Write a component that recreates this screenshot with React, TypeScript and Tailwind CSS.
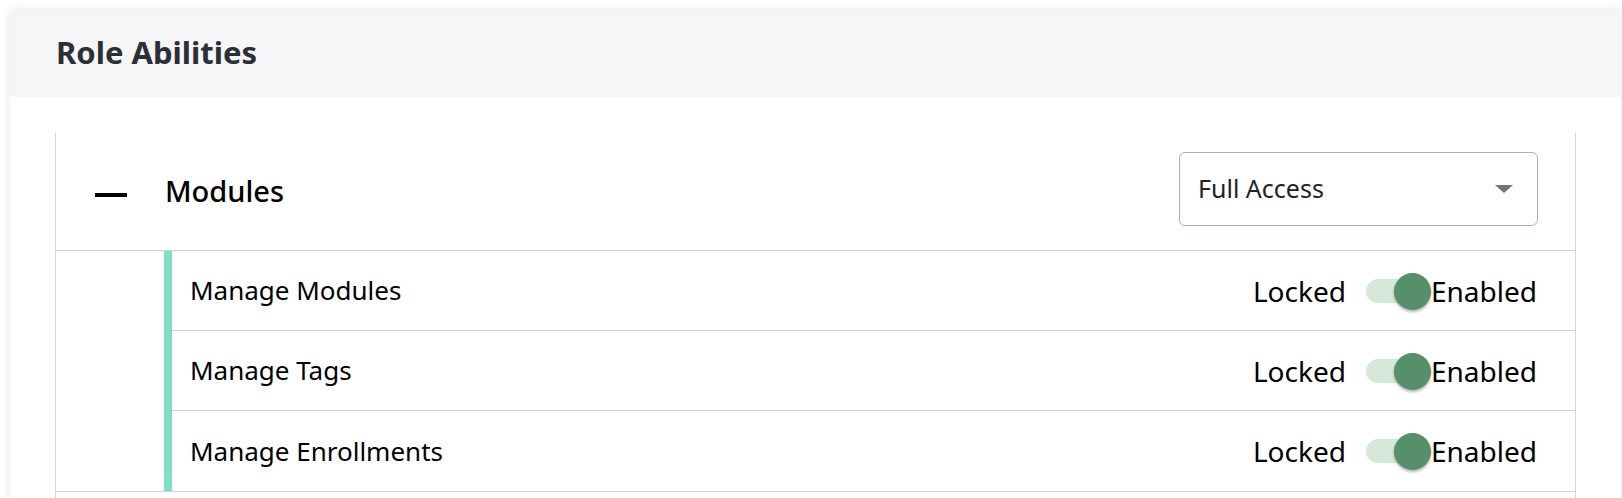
const abilities = ['Manage Modules', 'Manage Tags', 'Manage Enrollments'];

function Toggle() {
  return (
    <div className="relative mx-[20px] h-[24px] w-[56px] shrink-0 rounded-full bg-[#d6e8d8]">
      <div className="absolute -top-[6px] left-[28px] h-[37px] w-[37px] rounded-full bg-[#568f69] shadow-[0_2px_3px_rgba(0,0,0,0.3)]" />
    </div>
  );
}

export default function App() {
  return (
    <div className="h-[498px] overflow-hidden bg-white pl-[10px] pr-[1px] pt-[10px] font-['Noto_Sans',sans-serif]">
      <div className="bg-white shadow-[0_0_8px_rgba(0,0,0,0.1)]">
        <div className="flex h-[87px] items-center bg-[#f6f6f8] px-[46px]">
          <h1 className="-mt-[3px] text-[31px] font-bold text-[#2b2f36]">Role Abilities</h1>
        </div>

        <div className="px-[45px] pt-[36px]">
          <div className="border-x border-[#d3d3dc]">
            <div className="flex items-center border-b border-[#d3d3dc] pb-[24px] pl-[39px] pr-[37px] pt-[19px]">
              <span className="mt-[11px] h-[4px] w-[32px] bg-black" />
              <span className="ml-[38px] mt-[3px] text-[29px] font-medium text-black">Modules</span>
              <div className="ml-auto flex h-[74px] w-[359px] items-center rounded-[6px] border border-[#a9b0bb] pl-[18px] pr-[24px]">
                <span className="text-[25px] text-[#222]">Full Access</span>
                <span className="ml-auto h-0 w-0 border-x-[9px] border-t-[8px] border-x-transparent border-t-[#757575]" />
              </div>
            </div>

            <div className="ml-[108px] border-l-8 border-[#7ddfc3]">
              {abilities.map((a, i) => (
                <div
                  key={a}
                  className={`flex h-[80px] items-center pl-[18px] pr-[38px] ${i < abilities.length - 1 ? 'border-b border-[#d3d3dc]' : ''}`}
                >
                  <span className="text-[26px] text-black">{a}</span>
                  <div className="ml-auto flex items-center text-[28px] text-black">
                    <span>Locked</span>
                    <Toggle />
                    <span className="-ml-[11px]">Enabled</span>
                  </div>
                </div>
              ))}
            </div>
          </div>
          <div className="h-[80px] border-x border-t border-[#d3d3dc]" />
        </div>
      </div>
    </div>
  );
}
